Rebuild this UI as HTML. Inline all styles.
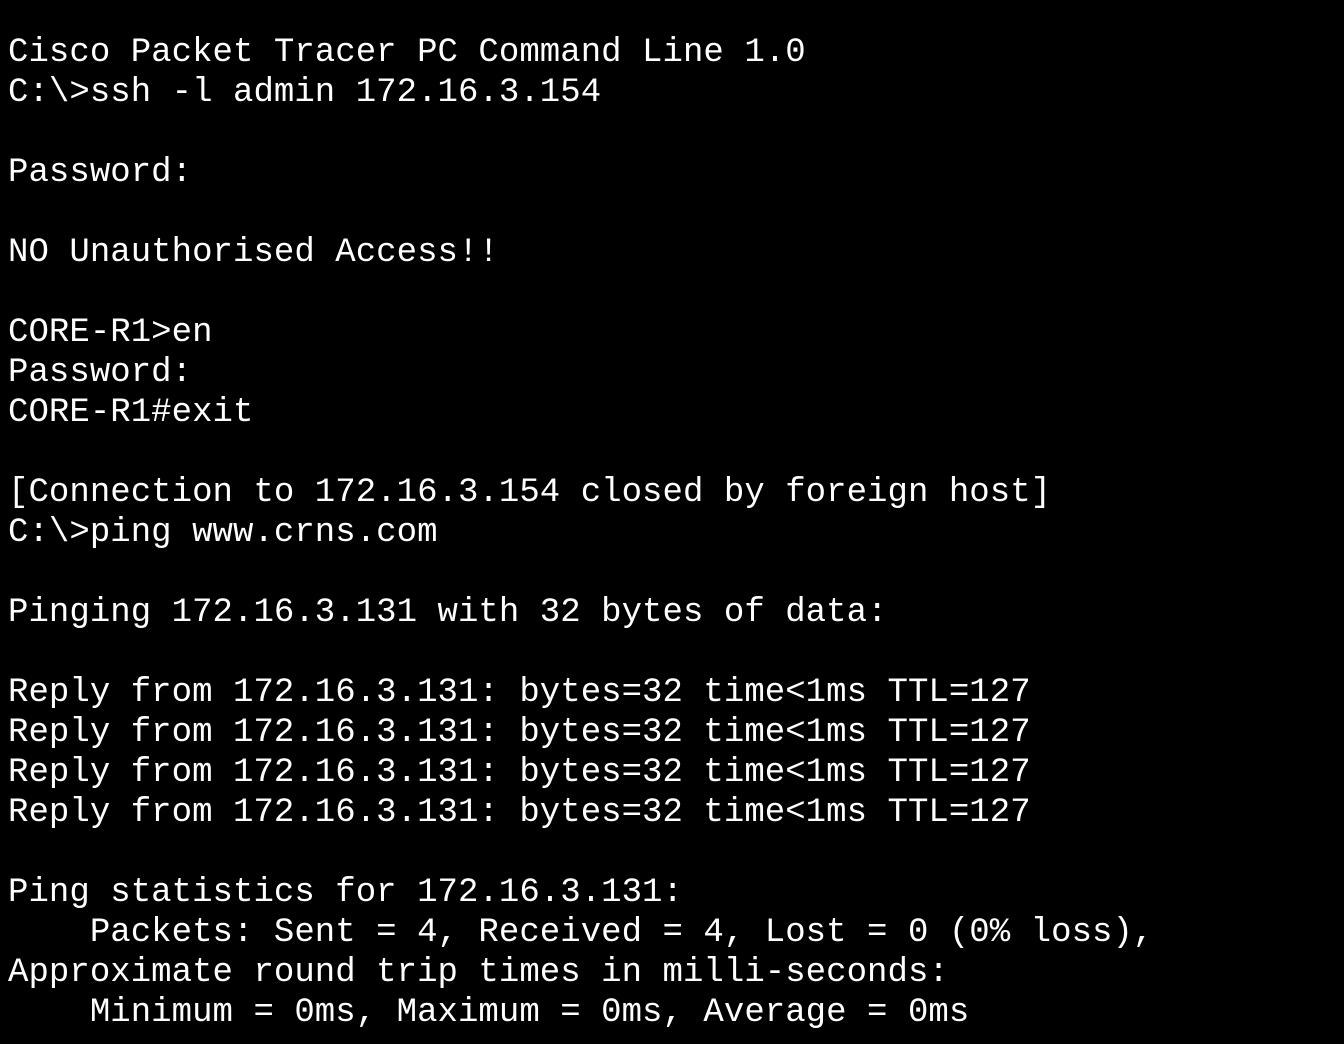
<!DOCTYPE html>
<html><head><meta charset="utf-8"><style>
html,body{margin:0;padding:0;background:#000;width:1344px;height:1044px;overflow:hidden}
pre{margin:0;padding:33px 0 0 8px;color:#fff;font-family:"Liberation Mono","DejaVu Sans Mono",monospace;font-size:34px;line-height:40px;letter-spacing:0.05px;white-space:pre}
</style></head><body><pre>Cisco Packet Tracer PC Command Line 1.0
C:\&gt;ssh -l admin 172.16.3.154

Password:

NO Unauthorised Access!!

CORE-R1&gt;en
Password:
CORE-R1#exit

[Connection to 172.16.3.154 closed by foreign host]
C:\&gt;ping www.crns.com

Pinging 172.16.3.131 with 32 bytes of data:

Reply from 172.16.3.131: bytes=32 time&lt;1ms TTL=127
Reply from 172.16.3.131: bytes=32 time&lt;1ms TTL=127
Reply from 172.16.3.131: bytes=32 time&lt;1ms TTL=127
Reply from 172.16.3.131: bytes=32 time&lt;1ms TTL=127

Ping statistics for 172.16.3.131:
    Packets: Sent = 4, Received = 4, Lost = 0 (0% loss),
Approximate round trip times in milli-seconds:
    Minimum = 0ms, Maximum = 0ms, Average = 0ms</pre></body></html>
